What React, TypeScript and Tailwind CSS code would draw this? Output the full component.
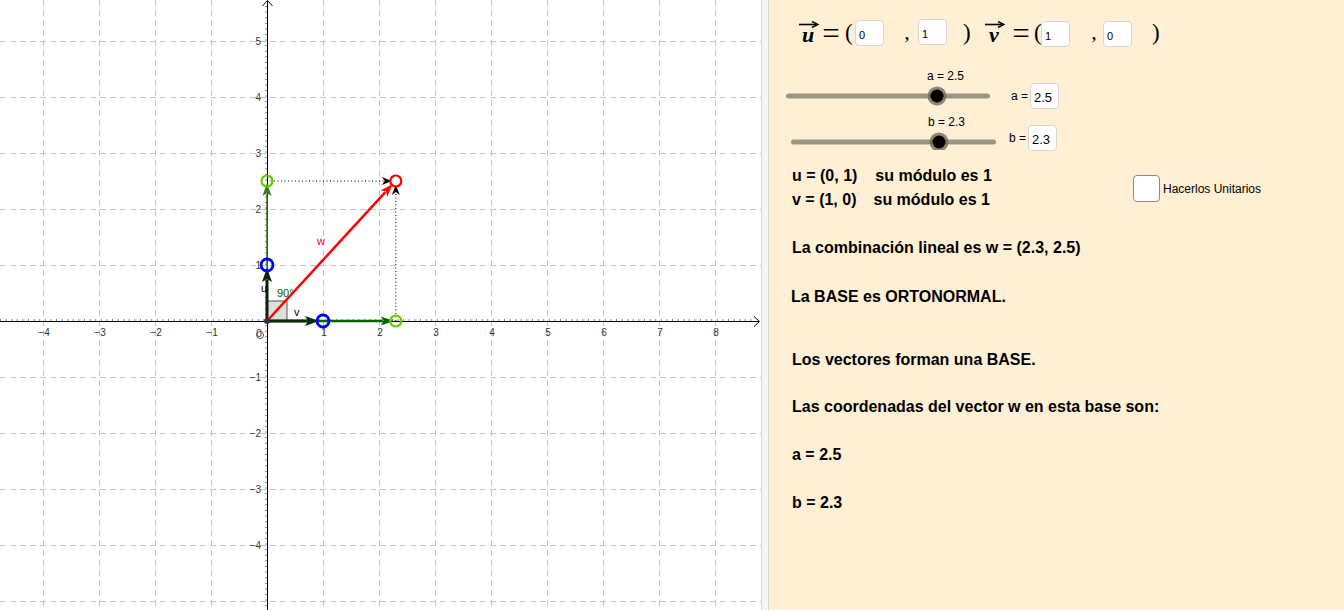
import React from "react";

const U = 56;
const OX = 267;
const OY = 321;
const px = (x: number) => OX + x * U;
const py = (y: number) => OY - y * U;

type ArrowProps = {
  x1: number;
  y1: number;
  x2: number;
  y2: number;
  color: string;
  width?: number;
  head?: number;
  hw?: number;
  dash?: string;
};

// vector line with a filled head at (x2, y2)
function Arrow({ x1, y1, x2, y2, color, width = 2.5, head = 13, hw = 4.5, dash }: ArrowProps) {
  const dx = x2 - x1;
  const dy = y2 - y1;
  const len = Math.hypot(dx, dy);
  const ux = dx / len;
  const uy = dy / len;
  const bx = x2 - ux * head;
  const by = y2 - uy * head;
  const pts = `${x2},${y2} ${bx - uy * hw},${by + ux * hw} ${bx + ux * 3},${by + uy * 3} ${bx + uy * hw},${by - ux * hw}`;
  return (
    <g>
      <line x1={x1} y1={y1} x2={bx + ux * 2} y2={by + uy * 2} stroke={color} strokeWidth={width} strokeDasharray={dash} />
      <polygon points={pts} fill={color} />
    </g>
  );
}

function Graph() {
  const xs = [-4, -3, -2, -1, 1, 2, 3, 4, 5, 6, 7, 8];
  const ys = [5, 4, 3, 2, 1, -1, -2, -3, -4, -5];
  const label = (n: number) => (n < 0 ? `\u2212${-n}` : `${n}`);
  const a = 2.5;
  const b = 2.3;

  return (
    <svg width={761} height={610} className="block shrink-0 bg-white">
      {/* grid */}
      {xs.map((k) => (
        <line key={"gx" + k} x1={px(k) + 0.5} y1={0} x2={px(k) + 0.5} y2={610} stroke="#c4c4c4" strokeDasharray="6 4" />
      ))}
      {ys.map((k) => (
        <line key={"gy" + k} x1={0} y1={py(k) + 0.5} x2={761} y2={py(k) + 0.5} stroke="#c4c4c4" strokeDasharray="6 4" />
      ))}

      {/* axes */}
      <line x1={0} y1={OY + 0.5} x2={759} y2={OY + 0.5} stroke="#000" />
      <line x1={0} y1={OY - 1} x2={755} y2={OY - 1} stroke="#000" strokeDasharray="1 4.6" />
      <polyline points={`${754},${OY - 4.5} ${759.5},${OY + 0.5} ${754},${OY + 5.5}`} fill="none" stroke="#000" />
      <line x1={OX + 0.5} y1={1} x2={OX + 0.5} y2={610} stroke="#000" />
      <line x1={OX - 1} y1={6} x2={OX - 1} y2={610} stroke="#000" strokeDasharray="1 4.6" />
      <polyline points={`${OX - 4.5},${6} ${OX + 0.5},${0.5} ${OX + 5.5},${6}`} fill="none" stroke="#000" />

      {/* axis numbers */}
      <g fontFamily="'Liberation Sans', Arial, sans-serif" fontSize={10} fill="#333">
        {xs.map((k) => (
          <text key={"lx" + k} x={px(k) + 1} y={OY + 15} textAnchor="middle">
            {label(k)}
          </text>
        ))}
        {ys
          .filter((k) => k !== -5)
          .map((k) => (
            <text key={"ly" + k} x={OX - 6} y={py(k) + 4} textAnchor="end">
              {label(k)}
            </text>
          ))}
        <text x={259} y={OY + 16} textAnchor="middle">
          0
        </text>
      </g>
      <circle cx={260} cy={OY + 14} r={3.5} fill="none" stroke="#555" strokeWidth={1} />

      {/* right angle */}
      <rect x={OX} y={OY - 20} width={20} height={20} fill="#dedede" stroke="#555" strokeWidth={1} />
      <text x={277} y={297} fontFamily="'Liberation Sans', Arial, sans-serif" fontSize={11} fill="#006400">
        90°
      </text>

      {/* dotted projections */}
      <Arrow x1={px(0)} y1={py(a)} x2={px(b) - 4} y2={py(a)} color="#000" width={1} dash="1 2.5" head={10} hw={4} />
      <Arrow x1={px(b)} y1={py(0)} x2={px(b)} y2={py(a) + 4} color="#000" width={1} dash="1 2.5" head={10} hw={4} />

      {/* scaled vectors */}
      <Arrow x1={OX} y1={OY} x2={px(0)} y2={py(a) + 2} color="#3d7a1f" width={1.6} />
      <Arrow x1={OX} y1={OY} x2={px(b) - 2} y2={py(0)} color="#006400" width={2.5} />

      {/* base vectors */}
      <Arrow x1={OX} y1={OY} x2={px(0)} y2={py(1) + 3} color="#0b1f0b" width={3} head={14} hw={5} />
      <Arrow x1={OX} y1={OY} x2={px(1) - 4} y2={py(0)} color="#0b2a0b" width={3} head={14} hw={5} />

      {/* w */}
      <Arrow x1={OX} y1={OY} x2={px(b) - 3} y2={py(a) + 3} color="#ff0000" width={2.5} />

      <circle cx={OX} cy={OY} r={3} fill="#333" />

      {/* points */}
      <circle cx={px(0)} cy={py(a)} r={5.5} fill="none" stroke="#66cc00" strokeWidth={2.2} />
      <circle cx={px(b)} cy={py(0)} r={5.5} fill="none" stroke="#66cc00" strokeWidth={2.2} />
      <circle cx={px(b)} cy={py(a)} r={5.5} fill="none" stroke="#ff0000" strokeWidth={2.2} />
      <circle cx={px(0)} cy={py(1)} r={6} fill="none" stroke="#0000ff" strokeWidth={2.8} />
      <circle cx={px(1)} cy={py(0)} r={6} fill="none" stroke="#0000ff" strokeWidth={2.8} />

      <g fontFamily="'Liberation Sans', Arial, sans-serif" fontSize={11}>
        <text x={261} y={292} fill="#000">u</text>
        <text x={294} y={316} fill="#000">v</text>
        <text x={317} y={245} fill="#ff0000">w</text>
      </g>
    </svg>
  );
}

function VecSym({ ch, className = "" }: { ch: string; className?: string }) {
  return (
    <span className={`flex w-[22px] shrink-0 flex-col items-center leading-none ${className}`}>
      <svg width={21} height={7} className="block">
        <line x1={1} y1={3.5} x2={18} y2={3.5} stroke="#000" strokeWidth={1.6} />
        <polyline points="14,0.5 20,3.5 14,6.5" fill="none" stroke="#000" strokeWidth={1.4} />
      </svg>
      <span className="-mt-[2px] text-[22px] font-bold italic leading-[18px]">{ch}</span>
    </span>
  );
}

function Box({ value, className = "" }: { value: string; className?: string }) {
  return (
    <input
      readOnly
      value={value}
      className={`h-[26px] w-[29px] shrink-0 rounded-[4px] border border-[#d6d6d6] bg-white pl-[3px] pt-[3px] font-['Liberation_Sans',Arial,sans-serif] text-[11px] text-black outline-none ${className}`}
    />
  );
}

function Glyph({ ch, className = "" }: { ch: string; className?: string }) {
  return <span className={`shrink-0 text-center ${className}`}>{ch}</span>;
}

function Slider({ knob, offset, end }: { knob: number; offset: number; end: number }) {
  return (
    <svg width={212} height={24} className="block shrink-0">
      <line x1={5.5} y1={offset} x2={end} y2={offset} stroke="#9b9383" strokeWidth={5} strokeLinecap="round" />
      <circle cx={knob} cy={offset} r={9.5} fill="#6f6a60" opacity={0.8} />
      <circle cx={knob} cy={offset} r={6.5} fill="#000" />
    </svg>
  );
}

export default function App() {
  return (
    <div className="flex h-[610px] w-[1344px] overflow-hidden bg-white font-['Liberation_Sans',Arial,sans-serif] text-black">
      <Graph />
      <div className="w-[8px] shrink-0 border-x border-[#d8d8d8] bg-[#f5f5f5]" />
      <div className="flex-1 bg-[#FFEFD5]">
        {/* vector inputs */}
        <div className="ml-[28px] mt-[17px] flex h-[30px] items-center font-['Liberation_Serif',serif] text-[22px] leading-none">
          <VecSym ch="u" />
          <Glyph ch="=" className="ml-[3px] mt-[2px] w-[18px] text-[31px]" />
          <Glyph ch="(" className="ml-[5px] w-[7px] text-[23px]" />
          <Box value="0" className="ml-[3px] mt-[2px]" />
          <Glyph ch="," className="ml-[20px] w-[6px]" />
          <Box value="1" className="ml-[8px]" />
          <Glyph ch=")" className="ml-[16px] w-[7px] text-[23px]" />
          <VecSym ch="v" className="ml-[13px]" />
          <Glyph ch="=" className="ml-[7px] mt-[2px] w-[18px] text-[31px]" />
          <Glyph ch="(" className="ml-[4px] w-[7px] text-[23px]" />
          <Box value="1" className="mt-[4px]" />
          <Glyph ch="," className="ml-[21px] w-[6px]" />
          <Box value="0" className="ml-[6px] mt-[4px]" />
          <Glyph ch=")" className="ml-[20px] w-[7px] text-[23px]" />
        </div>

        {/* slider a */}
        <div className="ml-[14px] mt-[23px]">
          <div className="pl-[144px] text-[12px] leading-[12px]">a = 2.5</div>
          <div className="mt-[2px] flex h-[24px] items-center">
            <Slider knob={154} offset={12} end={204.5} />
            <span className="ml-[16px] text-[12px]">a =</span>
            <Box value="2.5" className="ml-[2px] h-[25px] pt-[2px] text-[13px]" />
          </div>
        </div>

        {/* slider b */}
        <div className="ml-[19px] mt-[8px]">
          <div className="pl-[140px] text-[12px] leading-[12px]">b = 2.3</div>
          <div className="mt-[-2px] flex h-[24px] items-center">
            <Slider knob={151} offset={16} end={205.5} />
            <span className="ml-[9px] text-[12px]">b =</span>
            <Box value="2.3" className="ml-[2px] h-[25px] pt-[2px] text-[13px]" />
          </div>
        </div>

        {/* results */}
        <div className="ml-[23px] mt-[14px] text-[16px] font-bold leading-[24px]">
          <div className="flex">
            <div className="w-[341px]">
              <div>
                u = (0, 1)<span className="ml-[18px]">su módulo es 1</span>
              </div>
              <div>
                v = (1, 0)<span className="ml-[17px]">su módulo es 1</span>
              </div>
            </div>
            <div className="mt-[11px] flex items-start">
              <div className="h-[27px] w-[27px] rounded-[4px] border border-[#8a8a8a] bg-white" />
              <span className="ml-[3px] mt-[8px] text-[12px] font-normal leading-[12px]">Hacerlos Unitarios</span>
            </div>
          </div>
          <div className="mt-[24px]">La combinación lineal es w = (2.3, 2.5)</div>
          <div className="-ml-[1px] mt-[25px]">La BASE es ORTONORMAL.</div>
          <div className="mt-[39px]">Los vectores forman una BASE.</div>
          <div className="mt-[23px]">Las coordenadas del vector w en esta base son:</div>
          <div className="mt-[24px]">a = 2.5</div>
          <div className="mt-[24px]">b = 2.3</div>
        </div>
      </div>
    </div>
  );
}
